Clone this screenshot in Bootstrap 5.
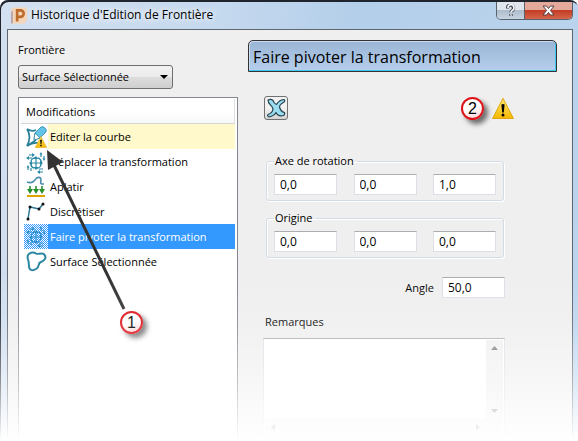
<!DOCTYPE html>
<html lang="fr">
<head>
<meta charset="utf-8">
<meta name="viewport" content="width=device-width, initial-scale=1">
<title>Historique d'Edition de Frontière</title>
<link rel="stylesheet" href="https://cdn.jsdelivr.net/npm/bootstrap@5.3.0/dist/css/bootstrap.min.css">
<style>
body{font-family:"Open Sans","Noto Sans",sans-serif;font-size:11px;line-height:16px;color:#000;background:#fff}
svg{display:block;flex:none}
.win{min-height:100vh;box-shadow:inset 1px 2px 0 #20242c;border-radius:8px 8px 0 0;padding:2px 5px 0 7px;background:linear-gradient(100deg,#d3e0f0 0,#c4d8ee 35%,#b4cfea 55%,#bcd5ee 100%);overflow:hidden}
.titlebar{height:27px}
.titlebar h1{font-size:12px;line-height:18px;text-shadow:0 0 6px #fff,0 0 8px #fff}
.caption-btns{border:1px solid #59636f;border-top:0;border-radius:0 0 5px 5px;overflow:hidden;height:18px}
.caption-btns button{border:0;padding:0;display:flex;align-items:center;justify-content:center;height:17px}
.help-btn{width:28px;background:linear-gradient(#dfe6ee 45%,#aebccb 50%,#c6d4e2);border-right:1px solid #59636f!important}
.close-btn{width:47px;background:linear-gradient(#e3aa9c 45%,#c43c25 50%,#d5664a)}
.client{background:#efefef;border:1px solid #5e6670;border-bottom:0;padding:10px 15px 0 10px;gap:10px}
.left-pane{width:220px;flex:none;padding-top:2px}
.left-pane label{margin-bottom:7px}
.combo{width:155px;height:24px;border:1px solid #707070;border-radius:3px;padding:0 24px 0 3px;font-size:11px;line-height:16px;color:#000;background-color:#ddd;background-image:url("data:image/svg+xml,%3Csvg xmlns='http://www.w3.org/2000/svg' viewBox='0 0 8 4'%3E%3Cpath d='M0 0h8L4 4z'/%3E%3C/svg%3E"),linear-gradient(#f2f2f2,#ebebeb 49%,#dddddd 50%,#cfcfcf);background-size:8px 4px,100% 100%;background-position:right 4px center,0 0}
.history{border:1px solid #828790;border-bottom:0;background:#fff;padding:1px 2px}
.history-head{height:25px;padding:2px 5px 0;border-bottom:1px solid #d5d5d5;border-right:1px solid #e0e0e0;background:linear-gradient(#fff 50%,#f7f8fa)}
.history .list-group{--bs-list-group-bg:transparent;--bs-list-group-border-width:0;border-radius:0;padding-left:3px}
.history .list-group-item{display:flex;align-items:center;padding:0;height:25px;color:#000;margin:0}
.item-name{flex:1;align-self:stretch;padding-left:2px;line-height:25px}
.edited .item-name{background:#fff9cb}
.current .item-name{background:#3399ff;color:#fff}
.banner{height:32px;border:1px solid #333;border-radius:5px 5px 0 0;background:linear-gradient(#9ab5d5,#b5cfec);box-shadow:inset -1px -1px 0 #3cc8f0,inset 1px 1px 0 #c9dcf0}
.banner h2{font-size:16px;line-height:32px;padding-left:4px}
.tool-row{padding:0 43px 0 16px}
.tool{width:24px;height:24px;border:1px solid #707070;border-radius:3px;background:linear-gradient(#f2f2f2 50%,#d4d4d4);padding:0}
.form-body{width:242px;margin:33px 0 0 15px}
.group{border:1px solid #d3dce6;border-radius:3px;padding:5px 7px 5px;margin:0 1px 9px 3px;box-shadow:inset 1px 1px 0 #fff,1px 1px 0 #fff}
.group legend{float:none;width:auto;font-size:11px;line-height:16px;padding:0 3px 0 1px;margin:0}
.num{width:63px;flex:none;height:21px;border:1px solid #dcdfe6;border-top-color:#abadb3;border-radius:0;padding:0 5px;font-size:12px;line-height:16px;color:#000;background:#fff}
.angle-row{margin-top:19px}
.notes-label{padding-left:2px}
.notes{border:1px solid #dcdfe6;border-top-color:#abadb3;background:#fff;height:100px;display:grid;grid-template-columns:1fr 17px;grid-template-rows:1fr 17px;padding:1px}
.notes textarea{border:0;border-radius:0;resize:none;padding:2px 4px;font-size:11px;overflow:hidden;min-height:0}
.track{background:#f0f0f0;display:flex;align-items:center;justify-content:space-between;padding:6px}
.step{width:23px;height:23px;border:2px solid #dd1218;border-radius:50%;background:linear-gradient(160deg,#fff 50%,#fbd0d0);box-shadow:4px 4px 5px rgba(0,0,0,.55);font-family:"Liberation Sans",Arial,sans-serif;font-size:16px;line-height:19px;text-align:center}
.callout-line{left:22px;top:50px;pointer-events:none}
.step-one{left:101px;top:213px}
.fade-out{height:170px;background:linear-gradient(rgba(255,255,255,0),rgba(255,255,255,.12) 30%,rgba(255,255,255,.5) 65%,#fff 100%);pointer-events:none}
</style>
<script src="https://cdn.jsdelivr.net/npm/bootstrap@5.3.0/dist/js/bootstrap.bundle.min.js"></script>
</head>
<body>
<svg width="0" height="0" class="position-absolute" aria-hidden="true">
<defs>
<linearGradient id="gold" x2="0" y2="1"><stop stop-color="#ffe873"/><stop offset="1" stop-color="#f5b800"/></linearGradient>
<pattern id="dither" width="2" height="2" patternUnits="userSpaceOnUse"><path d="M0 0h1v1H0zM1 1h1v1H1z" fill="#3399ff" shape-rendering="crispEdges"/></pattern>
<symbol id="warn" viewBox="0 0 22 22"><path d="M11 .8 21.5 21H.5z" fill="url(#gold)" stroke="#e0a80c" stroke-linejoin="round"/><path d="M9.4 7.200q1.600-1.200 3.200 0L11.800 15h-1.600z"/><circle cx="11" cy="17.600" r="1.500"/></symbol>
<symbol id="move" viewBox="0 0 24 24"><g fill="none" stroke="#2a8aa6" stroke-width="1.200"><circle cx="12" cy="13" r="5.500" stroke-dasharray="5.600 3.040" stroke-dashoffset="-1.500"/><path d="M12 9v8M8 13h8M5 5h4M4 8h4M17 4v3M20 6v3M15 19h4M16 22h3M4 17v3M7 18v3"/></g><path d="m12 6 2.500 3h-5zM12 20l2.500-3h-5zM5 13l3-2.500v5zM19 13l-3-2.500v5zM8 3l3 2-3 2zM5 6v4L2 8zM15.500 4.500h3L17 2zM18.500 8.500h3L20 11zM2.500 17.500h3L4 15zM16 20v4l-3-2z" fill="#2a8aa6"/></symbol>
</defs>
</svg>
<main class="win position-relative d-flex flex-column">
  <header class="titlebar d-flex align-items-start">
    <div class="d-flex align-items-center gap-1 pt-1 ps-1 flex-grow-1">
      <svg width="16" height="17" viewBox="0 0 17 17"><path d="M0 2 3 0h14v14l-3 3H0z" fill="#f5d5b8"/><path d="M0 5 2 3v14H0z" fill="#b9a5a8"/><path d="M6.500 15V3h3.500a3.400 3.400 0 0 1 0 7H6.500" fill="none" stroke="#bd6c2d" stroke-width="2.800"/></svg>
      <h1 class="m-0 fw-normal">Historique d'Edition de Frontière</h1>
    </div>
    <div class="caption-btns d-flex">
      <button type="button" class="help-btn" aria-label="Aide"><svg width="10" height="13" viewBox="0 0 10 13"><path d="M1.500 4.500V4a3 3 0 1 1 5 2.300Q5 7.300 5 8.300M5 10v2" fill="none" stroke="#454d58" stroke-width="3.400"/><path d="M2 4a3 3 0 1 1 4.500 2.300Q5 7.300 5 8.500M5 10.300v1.400" fill="none" stroke="#fff" stroke-width="1.600"/></svg></button>
      <button type="button" class="close-btn" aria-label="Fermer"><svg width="13" height="11" viewBox="0 0 13 11"><path d="M1 1h3.500l2 2.500 2-2.500H12L8.500 5.500 12 10H8.500l-2-2.500-2 2.500H1l3.500-4.500z" fill="#fff" stroke="#5a3c42"/></svg></button>
    </div>
  </header>
  <div class="client d-flex flex-grow-1">
    <section class="left-pane d-flex flex-column">
      <label for="boundary">Frontière</label>
      <select id="boundary" class="form-select combo mb-2"><option>Surface Sélectionnée</option></select>
      <div class="history position-relative flex-grow-1">
        <div class="history-head d-flex align-items-center">Modifications</div>
        <ul class="list-group">
          <li class="list-group-item edited"><svg width="24" height="24" viewBox="0 0 24 24"><path d="M3 4q5 3 9 1M3 4q5 8 0 17 6-4 11-3M3 21l9-6" fill="none" stroke="#287f98" stroke-width="1.700"/><path d="m10 15 1-7 6-6q2-1 4 1t1 4l-6 6z" fill="#62c4e8" stroke="#2d86a2" stroke-width=".8"/><path d="m10 15 1-7 5 5z" fill="#fff" stroke="#2d86a2" stroke-width=".8"/><use href="#warn" x="11" y="11" width="12" height="12"/></svg><span class="item-name">Editer la courbe</span></li>
          <li class="list-group-item"><svg width="24" height="24"><use href="#move" width="24" height="24"/></svg><span class="item-name">Déplacer la transformation</span></li>
          <li class="list-group-item"><svg width="24" height="24" viewBox="0 0 24 24"><path d="M3 7q5 2 8-2c2-4 6-3 6 0s-2 4 3 4" fill="none" stroke="#4b8dac" stroke-width="1.600"/><path d="M6 11v6M12 11v6M18 11v6" stroke="#26902b" stroke-width="1.600"/><path d="M3 14h6l-3 5zM9 14h6l-3 5zM15 14h6l-3 5z" fill="#26902b"/><path d="M3 21h18" stroke="#dca400" stroke-width="2"/></svg><span class="item-name">Aplatir</span></li>
          <li class="list-group-item"><svg width="24" height="24" viewBox="0 0 24 24"><path d="m4 19 2-12 9 2 4-5" fill="none" stroke="#2d7892" stroke-width="1.500"/><g fill="#111"><circle cx="4" cy="19" r="1.500"/><circle cx="6" cy="7" r="1.500"/><circle cx="15" cy="9" r="1.500"/><circle cx="19" cy="4" r="1.500"/></g></svg><span class="item-name">Discrétiser</span></li>
          <li class="list-group-item current" aria-current="true"><svg width="24" height="25"><use href="#move" width="24" height="24"/><rect width="24" height="25" fill="url(#dither)"/></svg><span class="item-name">Faire pivoter la transformation</span></li>
          <li class="list-group-item"><svg width="24" height="24" viewBox="0 0 24 24"><path d="M4 5c2-3 6-3 8-1.500s7-2 9 2-3 6-5 7 0 4-4 6.500-7 1-7-3 0-4-1-6.500 0-4 0-4.500z" fill="none" stroke="#2c86a2" stroke-width="2"/></svg><span class="item-name">Surface Sélectionnée</span></li>
        </ul>
        <svg class="callout-line position-absolute" width="90" height="164" viewBox="0 0 90 164" aria-hidden="true"><path d="m12 15 71 146" stroke="#333" stroke-width="3"/><path d="m6 2 1 20 15-8z" fill="#333"/></svg>
        <div class="step step-one position-absolute">1</div>
      </div>
    </section>
    <section class="flex-grow-1">
      <div class="banner"><h2 class="m-0 fw-normal">Faire pivoter la transformation</h2></div>
      <div class="tool-row d-flex justify-content-between align-items-center mt-4">
        <button type="button" class="tool d-flex align-items-center justify-content-center" aria-label="Supprimer"><svg width="20" height="20" viewBox="0 0 20 20"><path d="M2 2q3-1.500 5 .5 1 3 3.500 4Q13 2 18 1.500q1.500 1 0 2.500-4 2-4.500 5 1 4.500 5 5.500.5 2-1 3-3.500 1-5.500-.5-1.500-1-2-2.500Q8 18 3 19q-2-1-1-2.500 4.500-1.500 5-5.500Q6 8 4.500 7 2 5 2 2z" fill="#9bdcf0" stroke="#24424e" stroke-width="1.200" stroke-linejoin="round"/></svg></button>
        <div class="d-flex gap-2"><div class="step">2</div><svg width="22" height="23" role="img" aria-label="Avertissement"><use href="#warn" width="22" height="23"/></svg></div>
      </div>
      <div class="form-body">
        <fieldset class="group"><legend>Axe de rotation</legend><div class="d-flex justify-content-between"><input class="form-control num" value="0,0" aria-label="Axe X"><input class="form-control num" value="0,0" aria-label="Axe Y"><input class="form-control num" value="1,0" aria-label="Axe Z"></div></fieldset>
        <fieldset class="group"><legend>Origine</legend><div class="d-flex justify-content-between"><input class="form-control num" value="0,0" aria-label="Origine X"><input class="form-control num" value="0,0" aria-label="Origine Y"><input class="form-control num" value="0,0" aria-label="Origine Z"></div></fieldset>
        <div class="angle-row d-flex justify-content-end align-items-center gap-2"><label for="angle">Angle</label><input id="angle" class="form-control num" value="50,0"></div>
        <label for="notes" class="notes-label d-block mt-3 mb-2">Remarques</label>
        <div class="notes">
          <textarea id="notes" class="form-control"></textarea>
          <div class="track flex-column"><svg width="7" height="4"><path d="M0 4h7L3.500 0z" fill="#777"/></svg><svg width="7" height="4"><path d="M0 0h7L3.500 4z" fill="#777"/></svg></div>
          <div class="track"><svg width="4" height="7"><path d="M4 0v7L0 3.500z" fill="#777"/></svg><svg width="4" height="7"><path d="M0 0v7l4-3.500z" fill="#777"/></svg></div>
          <div class="track"></div>
        </div>
      </div>
    </section>
  </div>
  <div class="fade-out position-absolute bottom-0 start-0 end-0"></div>
</main>
</body>
</html>
